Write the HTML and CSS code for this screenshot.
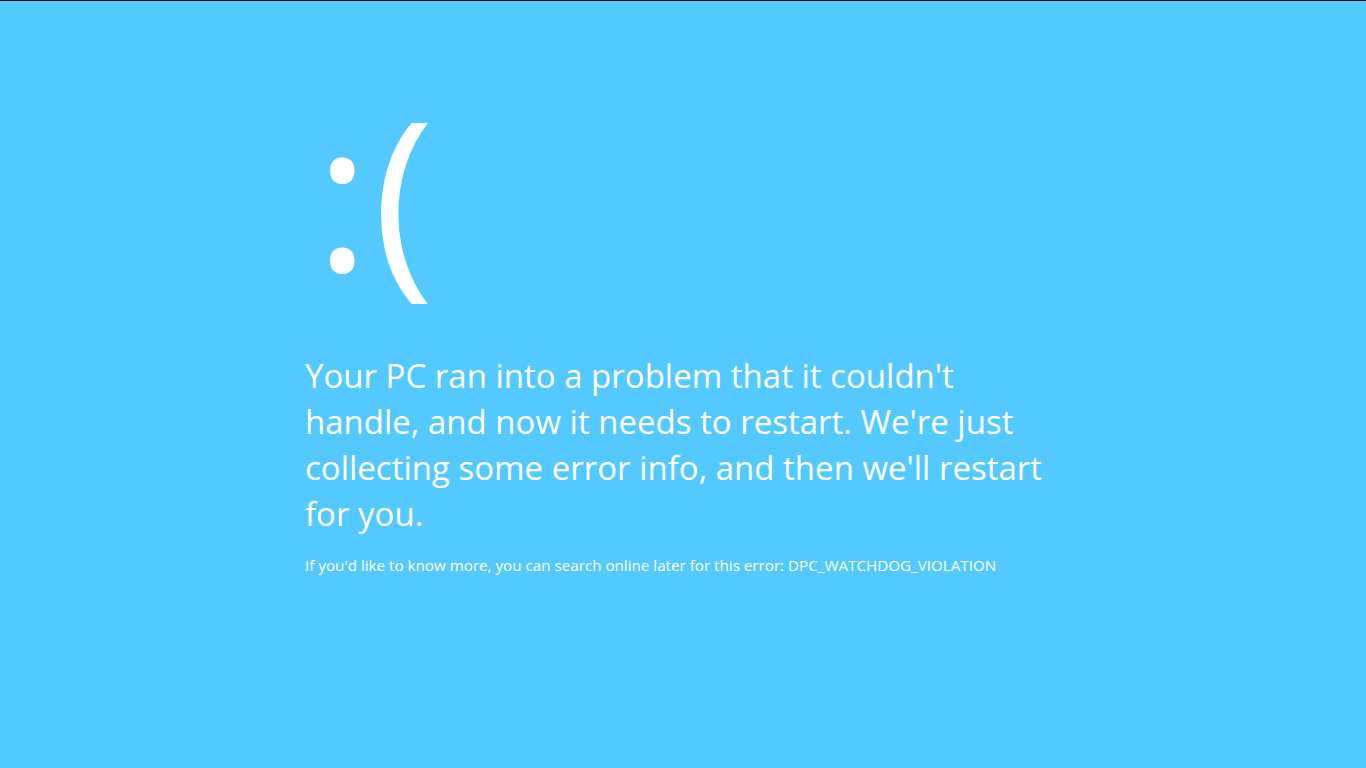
FILE: index.html
```html
<!DOCTYPE html>
<html lang="en">
<head>
<meta charset="utf-8">
<title>Blue screen</title>
<link rel="stylesheet" href="styles.css">
</head>
<body>
<main class="screen">
  <div class="content">
    <div class="face">:(</div>
    <p class="message">Your PC ran into a problem that it couldn't<br>handle, and now it needs to restart. We're just<br>collecting some error info, and then we'll restart<br>for you.</p>
    <p class="detail">If you'd like to know more, you can search online later for this error: DPC_WATCHDOG_VIOLATION</p>
  </div>
</main>
</body>
</html>
```
FILE: styles.css
```css
html, body {
  margin: 0;
  padding: 0;
  height: 100%;
  background: #54c9ff;
}
.screen {
  box-sizing: border-box;
  height: 768px;
  border-top: 1px solid #000;
  background: #54c9ff;
  color: #fff;
  font-family: "Open Sans", "Noto Sans", sans-serif;
  overflow: hidden;
}
.content {
  padding-left: 305px;
  padding-top: 60px;
}
.face {
  font-size: 208px;
  font-weight: 400;
  line-height: 260px;
  height: 260px;
  margin-left: 10px;
  letter-spacing: 3px;
}
.message {
  margin: 32px 0 0 0;
  font-size: 33px;
  line-height: 46px;
  white-space: nowrap;
}
.detail {
  margin: 18px 0 0 0;
  font-size: 15.2px;
  line-height: 20px;
  white-space: nowrap;
}
```
